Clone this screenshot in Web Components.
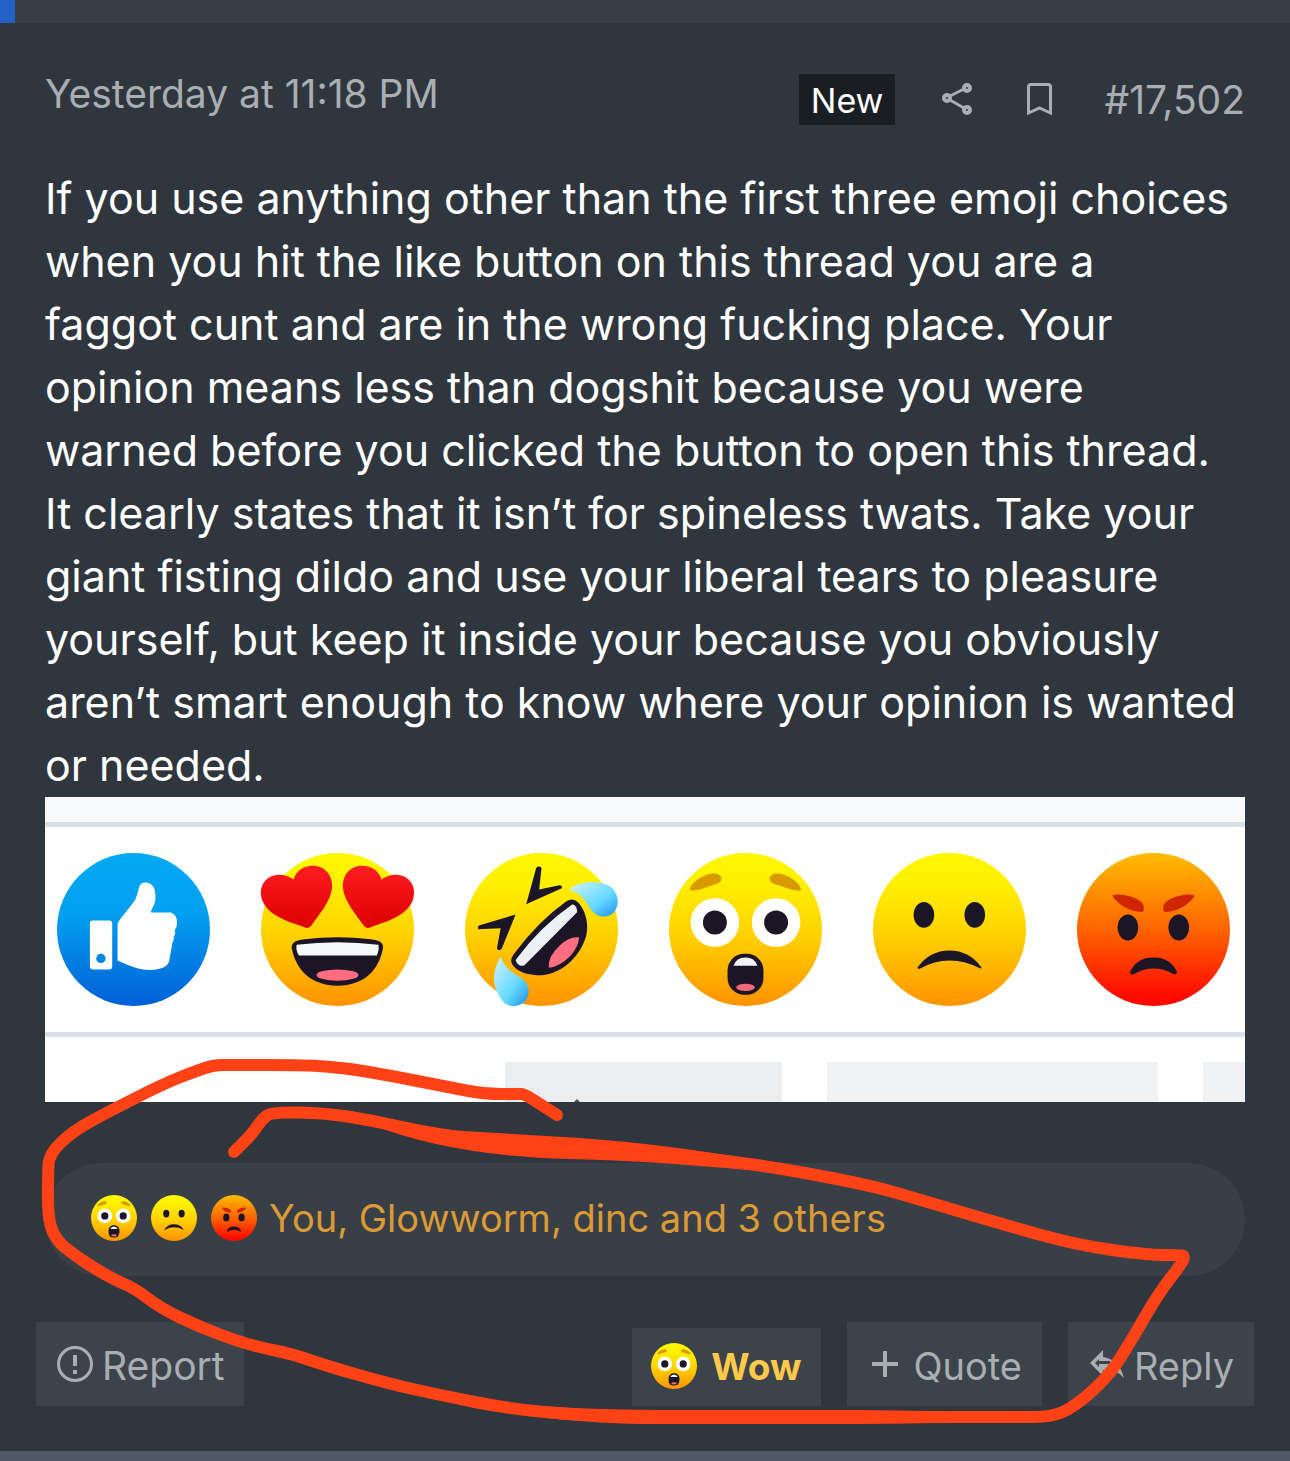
<!DOCTYPE html>
<html lang="en">
<head>
<meta charset="utf-8">
<meta name="viewport" content="width=device-width, initial-scale=1">
<title>Thread post #17,502</title>
<style>
    body {
        margin: 0;
        background: #30363e;
        color: #fff;
        font-family: Inter, "Liberation Sans", sans-serif;
    }
</style>
</head>
<body>

<forum-page>
    <forum-post date="Yesterday at 11:18 PM" number="#17,502">
        If you use anything other than the first three emoji choices<br>
        when you hit the like button on this thread you are a<br>
        faggot cunt and are in the wrong fucking place. Your<br>
        opinion means less than dogshit because you were<br>
        warned before you clicked the button to open this thread.<br>
        It clearly states that it isn’t for spineless twats. Take your<br>
        giant fisting dildo and use your liberal tears to pleasure<br>
        yourself, but keep it inside your because you obviously<br>
        aren’t smart enough to know where your opinion is wanted<br>
        or needed.
        <reaction-picture slot="attachment"></reaction-picture>
        <reactions-bar slot="reactions" types="wow sad angry">You, Glowworm, dinc and 3 others</reactions-bar>
        <post-action slot="actions" icon="report" class="first">Report</post-action>
        <post-action slot="actions" icon="wow" active>Wow</post-action>
        <post-action slot="actions" icon="quote">Quote</post-action>
        <post-action slot="actions" icon="reply">Reply</post-action>
    </forum-post>
    <marker-scribble slot="overlay"></marker-scribble>
</forum-page>

<script>
const YELLOW = `
    <defs><linearGradient id="face" x1="0" y1="0" x2="0" y2="1">
        <stop offset="0" stop-color="#fff800"/><stop offset=".2" stop-color="#fff000"/>
        <stop offset=".55" stop-color="#ffd000"/><stop offset="1" stop-color="#ff9200"/>
    </linearGradient></defs>
    <circle cx="230" cy="230" r="230" fill="url(#face)"/>`;

// every face is drawn on a 460 x 460 box
const FACES = {
    like: `
        <defs><linearGradient id="face" x1="0" y1="0" x2="0" y2="1">
            <stop offset="0" stop-color="#03aaf3"/><stop offset=".4" stop-color="#029ff0"/>
            <stop offset="1" stop-color="#0260d6"/>
        </linearGradient></defs>
        <circle cx="230" cy="230" r="230" fill="url(#face)"/>
        <rect x="99" y="203" width="67" height="147" rx="9" fill="#fff"/>
        <circle cx="132" cy="317" r="14" fill="#0284e2"/>
        <path fill="#fff" d="M182 214 Q184 206 190 199 L226 153 Q238 140 240 128 L247 102 Q253 86 270 89 C292 93 297 112 296 136 C295 156 285 165 282 179 L342 179 Q362 186 361 212 Q360 226 354 232 Q358 241 351 251 Q353 262 347 270 L337 326 Q331 344 308 348 Q276 356 238 346 Q210 336 182 323 Z"/>`,
    love: YELLOW + `
        <defs>
            <linearGradient id="red" x1="0" y1="0" x2="0" y2="1">
                <stop offset="0" stop-color="#ff1c22"/><stop offset="1" stop-color="#dc0000"/>
            </linearGradient>
            <path id="heart" d="M98 80 C112 22 216 20 214 104 C210 145 175 185 152 217 Q143 230 131 223 C80 206 22 188 4 143 C-18 78 50 44 98 80 Z"/>
        </defs>
        <use href="#heart" fill="url(#red)"/>
        <use href="#heart" fill="url(#red)" transform="translate(460) scale(-1 1)"/>
        <path fill="#1b1526" d="M92 285 C92 265 110 262 130 259 Q230 248 330 259 C350 262 368 265 367 285 C355 352 310 399 230 399 C150 399 105 352 92 285 Z"/>
        <path fill="#f6f8fb" d="M107 276 Q230 260 353 276 Q356 294 348 308 L114 308 Q104 294 107 276 Z"/>
        <ellipse cx="230" cy="367" rx="63" ry="17" fill="#ff6e80"/>`,
    rofl: YELLOW + `
        <defs><linearGradient id="tear" x1="0" y1="0" x2="1" y2="1">
            <stop offset=".1" stop-color="#c0eeff"/><stop offset=".6" stop-color="#66daff"/>
            <stop offset="1" stop-color="#1b8ef0"/>
        </linearGradient></defs>
        <path fill="#1b1526" d="M214 45 Q221 36 230 45 L223 110 L284 97 Q293 97 291 106 L184 154 Z"/>
        <path fill="#1b1526" d="M40 229 Q36 220 44 217 L152 185 L110 289 Q101 296 96 287 L107 226 Z"/>
        <path fill="#1b1526" d="M306 144 Q322 134 337 146 C370 178 376 235 356 272 C330 330 270 374 208 367 Q152 361 139 328 Q137 316 150 300 Q220 205 306 144 Z"/>
        <path fill="#eef0f5" d="M323 154 Q338 158 337 178 L178 338 Q160 344 152 322 Q225 222 323 154 Z"/>
        <path fill="#ff6e80" d="M343 254 Q342 280 318 308 Q285 342 252 345 Q248 312 285 278 Q315 250 343 254 Z"/>
        <path fill="url(#tear)" d="M313 109 C345 84 402 80 435 100 C465 120 468 165 440 185 C414 199 388 189 372 160 C357 132 340 120 313 109 Z"/>
        <path fill="url(#tear)" d="M107 312 C118 342 136 355 160 370 C192 387 200 420 181 445 C162 466 128 466 110 442 C80 400 80 360 107 312 Z"/>`,
    wow: YELLOW + `
        <defs><path id="brow" d="M63 110 C68 84 112 59 142 62 C164 68 162 88 143 93 C116 100 96 112 70 113 Q62 114 63 110 Z"/></defs>
        <use href="#brow" fill="#d99a00"/>
        <use href="#brow" fill="#d99a00" transform="translate(460) scale(-1 1)"/>
        <g fill="#fff"><circle cx="138" cy="209" r="73"/><circle cx="322" cy="209" r="73"/></g>
        <g fill="#1b1526"><circle cx="138" cy="209" r="36"/><circle cx="322" cy="209" r="36"/></g>
        <rect x="176" y="303" width="108" height="123" rx="50" fill="#1b1526"/>
        <path fill="#f2f2f6" d="M194 339 Q202 314 230 314 Q258 314 266 339 Z"/>
        <ellipse cx="230" cy="404" rx="28" ry="11" fill="#f0697c"/>`,
    sad: YELLOW + `
        <g fill="#1b1526">
            <ellipse cx="153" cy="186" rx="31" ry="39"/><ellipse cx="306" cy="186" rx="31" ry="39"/>
            <path d="M134 344 Q170 293 230 293 Q290 293 326 344 Q328 350 318 345 Q275 323 230 323 Q185 323 142 347 Q134 350 134 344 Z"/>
        </g>`,
    angry: `
        <defs>
            <linearGradient id="face" x1="0" y1="0" x2="0" y2="1">
                <stop offset="0" stop-color="#ffbc00"/><stop offset=".5" stop-color="#ff6400"/>
                <stop offset=".95" stop-color="#ff0800"/>
            </linearGradient>
            <path id="brow" d="M106 128 C130 118 176 132 194 148 Q206 164 198 177 C168 180 122 158 106 128 Z"/>
        </defs>
        <circle cx="230" cy="230" r="230" fill="url(#face)"/>
        <use href="#brow" fill="#cf2600"/>
        <use href="#brow" fill="#cf2600" transform="translate(460) scale(-1 1)"/>
        <g fill="#1b1526">
            <ellipse cx="153" cy="224" rx="31" ry="39"/><ellipse cx="306" cy="224" rx="31" ry="39"/>
            <path d="M160 356 Q180 314 230 314 Q280 314 300 356 Q302 368 288 363 Q262 347 230 347 Q198 347 172 364 Q158 368 160 356 Z"/>
        </g>`
};

const ICONS = {
    report: `<svg width="36" height="36" viewBox="0 0 36 36" fill="none" stroke="currentColor">
        <circle cx="18" cy="18" r="16.500" stroke-width="3"/>
        <path d="M18 9v11M18 24v4" stroke-width="4"/></svg>`,
    quote: `<svg width="28" height="28" viewBox="0 0 28 28" fill="none" stroke="currentColor">
        <path d="M14 1v26M1 14h26" stroke-width="4"/></svg>`,
    reply: `<svg width="34" height="28" viewBox="0 0 34 28" fill="currentColor">
        <path fill-rule="evenodd" d="M13 0V7C25 9 31 17 34 28C28 21 22 20 13 20V26L0 13Z M9 9L5 13L9 17V14H20V11H9Z"/></svg>`
};

class ReactionIcon extends HTMLElement {
    connectedCallback() {
        this.attachShadow({ mode: 'open' }).innerHTML = `
            <style>
                :host { display: block; flex: none; width: 46px; }
                svg { display: block; width: 100%; overflow: visible; }
            </style>
            <svg viewBox="0 0 460 460" aria-hidden="true">${FACES[this.getAttribute('type')]}</svg>
        `;
    }
}

class ReactionPicture extends HTMLElement {
    connectedCallback() {
        this.attachShadow({ mode: 'open' }).innerHTML = `
            <style>
                :host { display: block; background: #fff; overflow: hidden; }
                .top { height: 25px; background: #f8f9fb; }
                .row {
                    display: flex;
                    justify-content: space-between;
                    padding: 26px 15px 26px 12px;
                    border: solid #d9e0e7;
                    border-width: 5px 0;
                }
                reaction-icon { width: 153px; }
                .below {
                    display: grid;
                    grid-template-columns: 277px 331px 42px;
                    justify-content: end;
                    column-gap: 45px;
                    height: 40px;
                    padding-top: 25px;
                }
                .below div { background: #f0f1f3; }
                .below div:first-child {
                    display: flex;
                    align-items: flex-end;
                    padding-left: 69px;
                    background: #ecedef;
                }
            </style>
            <div class="top"></div>
            <div class="row">
                ${Object.keys(FACES).map(type => `<reaction-icon type="${type}"></reaction-icon>`).join('')}
            </div>
            <div class="below">
                <div><svg width="6" height="3" viewBox="0 0 6 3"><path d="M0 3L3 0L6 3Z" fill="#4a5160"/></svg></div>
                <div></div>
                <div></div>
            </div>
        `;
    }
}

class ReactionsBar extends HTMLElement {
    connectedCallback() {
        const types = this.getAttribute('types').split(' ');

        this.attachShadow({ mode: 'open' }).innerHTML = `
            <style>
                :host { display: block; }
                a {
                    display: flex;
                    align-items: center;
                    gap: 14px;
                    min-height: 113px;
                    padding: 0 46px 4px;
                    box-sizing: border-box;
                    border-radius: 57px;
                    background: #393f46;
                    color: #dc9a35;
                    font-size: 38px;
                    line-height: 48px;
                    text-decoration: none;
                }
                .names { margin-left: -2px; }
            </style>
            <a href="#reactions">
                ${types.map(type => `<reaction-icon type="${type}"></reaction-icon>`).join('')}
                <span class="names"><slot></slot></span>
            </a>
        `;
    }
}

class PostAction extends HTMLElement {
    connectedCallback() {
        const icon = this.getAttribute('icon');

        this.attachShadow({ mode: 'open' }).innerHTML = `
            <style>
                :host { display: block; }
                button {
                    display: flex;
                    align-items: center;
                    gap: 9px;
                    height: 84px;
                    margin: 0;
                    padding: 0 20px;
                    border: 0;
                    background: #3d434a;
                    color: #a9aeb2;
                    font: inherit;
                    font-size: 38px;
                    cursor: pointer;
                }
                span { padding-top: 3px; }
                button.report { padding: 0 19px 0 21px; font-size: 39px; }
                button.quote { padding-left: 24px; gap: 14px; }
                button.reply { padding-left: 22px; gap: 10px; }
                :host([active]) button {
                    height: 78px;
                    padding: 0 20px 2px 19px;
                    gap: 14px;
                    color: #ffca4a;
                    font-size: 37px;
                    font-weight: 700;
                }
                :host([active]) span { padding: 0; }
            </style>
            <button type="button" class="${icon}">
                ${ICONS[icon] || `<reaction-icon type="${icon}"></reaction-icon>`}
                <span><slot></slot></span>
            </button>
        `;
    }
}

class ForumPost extends HTMLElement {
    connectedCallback() {
        this.attachShadow({ mode: 'open' }).innerHTML = `
            <style>
                :host { display: block; padding: 51px 45px 45px; }
                header {
                    display: flex;
                    align-items: flex-start;
                    justify-content: space-between;
                    color: #a9aeb2;
                    font-size: 39px;
                    line-height: 39px;
                }
                a { color: inherit; text-decoration: none; }
                .tools { display: flex; align-items: center; }
                .tools svg { display: block; }
                .new {
                    padding: 2px 12px 0;
                    background: #1a1d22;
                    color: #fff;
                    font-size: 34px;
                    line-height: 49px;
                }
                .share { margin-left: 47px; }
                .bookmark { margin: 0 52px 0 55px; }
                .text {
                    margin-top: 42px;
                    font-size: 43px;
                    line-height: 63px;
                }
                .reactions { margin-top: 61px; }
                footer {
                    display: flex;
                    align-items: flex-end;
                    gap: 26px;
                    margin: 46px -9px 0;
                }
                ::slotted(.first) { margin-right: auto; }
            </style>
            <header>
                <a href="#post"><time>${this.getAttribute('date')}</time></a>
                <div class="tools">
                    <span class="new">New</span>
                    <a class="share" href="#share" aria-label="Share">
                        <svg width="30" height="33" viewBox="0 0 30 33" fill="none" stroke="currentColor" stroke-width="4">
                            <circle cx="5" cy="15" r="3"/><circle cx="25" cy="5" r="3"/><circle cx="25" cy="27" r="3"/>
                            <path d="M8 13L22 6M8 17L22 25" stroke-width="3"/>
                        </svg>
                    </a>
                    <a class="bookmark" href="#bookmark" aria-label="Bookmark">
                        <svg width="25" height="33" viewBox="0 0 25 33" fill="none" stroke="currentColor" stroke-width="3">
                            <path d="M1.500 30V4Q1.500 1.500 4 1.500H21Q23.500 1.500 23.500 4V30L12.500 25Z"/>
                        </svg>
                    </a>
                    <a href="#number">${this.getAttribute('number')}</a>
                </div>
            </header>
            <div class="text"><slot></slot></div>
            <slot name="attachment"></slot>
            <div class="reactions"><slot name="reactions"></slot></div>
            <footer><slot name="actions"></slot></footer>
        `;
    }
}

class MarkerScribble extends HTMLElement {
    #points = [
        [557, 1115], [540, 1104], [524, 1094], [518, 1094], [484, 1094], [453, 1088], [387, 1075],
        [345, 1068], [306, 1065], [230, 1065],
        [214, 1065], [196, 1071], [163, 1084], [108, 1112], [73, 1131], [49, 1154], [48, 1175],
        [48, 1222], [58, 1242], [72, 1253], [92, 1267], [117, 1281], [134, 1288], [162, 1309],
        [200, 1327], [240, 1342], [267, 1349], [292, 1354], [327, 1366], [390, 1384], [440, 1395],
        [510, 1409], [580, 1415], [640, 1417], [780, 1418], [900, 1417], [1020, 1417], [1050, 1417],
        [1073, 1408], [1107, 1378], [1127, 1348], [1158, 1294], [1183, 1262], [1184, 1256],
        [1182, 1255], [1148, 1255], [1077, 1245], [1005, 1225], [911, 1197], [872, 1186],
        [812, 1174], [752, 1164], [676, 1155], [600, 1150], [540, 1146], [469, 1139],
        [420, 1131], [375, 1121], [326, 1113], [272, 1112], [262, 1119], [253, 1133], [234, 1152]
    ];

    connectedCallback() {
        this.attachShadow({ mode: 'open' }).innerHTML = `
            <style>
                :host { display: block; pointer-events: none; }
                svg { display: block; width: 100%; }
            </style>
            <svg viewBox="0 0 1290 1461" fill="none" stroke="#ff4216" stroke-width="12"
                stroke-linecap="round" stroke-linejoin="round" aria-hidden="true">
                <path d="${this.#smooth(this.#points)}"/>
                <g fill="#ff4216" stroke="none">
                    <path d="M370 1116 Q430 1130 480 1132 L580 1138 Q680 1145 800 1168 L760 1171 Q640 1160 570 1159 Q450 1156 370 1124Z"/>
                    <path d="M500 1404 Q580 1410 660 1410 H860 L1000 1412 V1422 L860 1424 H640 Q560 1422 500 1411Z"/>
                </g>
            </svg>
        `;
    }

    // curve through the middle of each pair of points
    #smooth(points) {
        let d = `M${points[0]}`;
        for (let i = 1; i < points.length - 1; i++) {
            const [x, y] = points[i];
            const [nx, ny] = points[i + 1];
            d += ` Q${x} ${y} ${(x + nx) / 2} ${(y + ny) / 2}`;
        }
        return d + ` L${points[points.length - 1]}`;
    }
}

class ForumPage extends HTMLElement {
    connectedCallback() {
        this.attachShadow({ mode: 'open' }).innerHTML = `
            <style>
                :host { display: block; position: relative; }
                .previous { height: 23px; background: #393f46; }
                .previous div { width: 15px; height: 100%; background: #2262c4; }
                .next { height: 10px; background: #515865; }
                .overlay { position: absolute; inset: 0; pointer-events: none; }
            </style>
            <div class="previous"><div></div></div>
            <slot></slot>
            <div class="next"></div>
            <div class="overlay"><slot name="overlay"></slot></div>
        `;
    }
}

customElements.define('reaction-icon', ReactionIcon);
customElements.define('reaction-picture', ReactionPicture);
customElements.define('reactions-bar', ReactionsBar);
customElements.define('post-action', PostAction);
customElements.define('forum-post', ForumPost);
customElements.define('marker-scribble', MarkerScribble);
customElements.define('forum-page', ForumPage);
</script>
</body>
</html>
